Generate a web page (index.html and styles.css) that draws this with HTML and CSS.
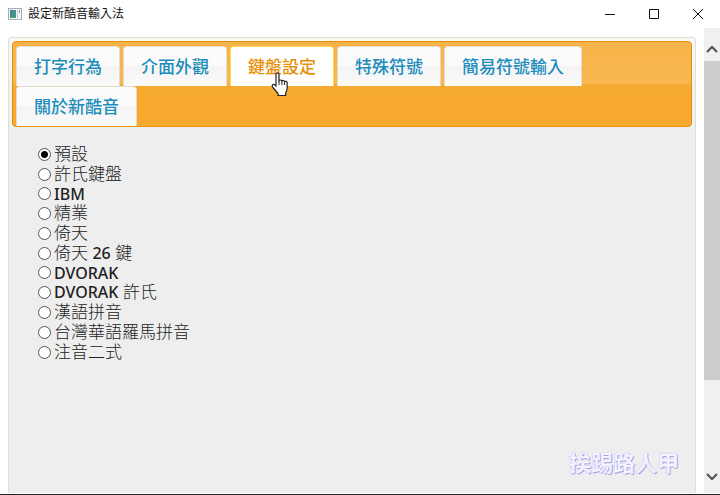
FILE: index.html
```html
<!DOCTYPE html>
<html lang="zh-Hant">
<head>
    <meta charset="UTF-8">
    <meta name="viewport" content="width=device-width, initial-scale=1.0">
    <title>設定新酷音輸入法</title>
    <link rel="stylesheet" href="styles.css">
</head>
<body>
    <div class="window">
        <header class="titlebar">
            <svg class="app-icon" width="14" height="12" viewBox="0 0 14 12">
                <defs>
                    <linearGradient id="screen" x1="0" y1="0" x2="1" y2="1">
                        <stop offset="0" stop-color="#3f7fa0"/>
                        <stop offset="1" stop-color="#4f9f78"/>
                    </linearGradient>
                </defs>
                <rect x="0.5" y="0.5" width="13" height="11" fill="#f4f6f7" stroke="#a3adb2"/>
                <rect x="2" y="2" width="6" height="8" fill="url(#screen)"/>
                <rect x="9" y="2" width="1" height="8" fill="#c3cdd0"/>
                <rect x="11" y="2" width="1" height="3" fill="#6f9f92"/>
            </svg>
            <h1>設定新酷音輸入法</h1>
            <div class="window-controls">
                <button type="button" aria-label="最小化">
                    <svg width="12" height="12" viewBox="0 0 12 12"><path d="M1 6.5h10"/></svg>
                </button>
                <button type="button" aria-label="最大化">
                    <svg width="12" height="12" viewBox="0 0 12 12"><path d="M1.5 1.5h9v9h-9z"/></svg>
                </button>
                <button type="button" aria-label="關閉">
                    <svg width="12" height="12" viewBox="0 0 12 12"><path d="M1 1l10 10M11 1L1 11"/></svg>
                </button>
            </div>
        </header>

        <div class="content">
            <main class="panel">
                <nav class="tabs">
                    <a href="#typing">打字行為</a>
                    <a href="#ui">介面外觀</a>
                    <a href="#keyboard" class="active">鍵盤設定
                        <svg class="pointer" width="18" height="25" viewBox="0 0 18 25">
                            <path d="M5 2.5C5 .4 8 .4 8 2.5V9c.3-1.4 2.700-1.300 2.900.2.500-1.200 2.500-.9 2.700.6.700-1 2.600-.6 2.600 1.200v5c0 2-.6 3.200-1.500 4.700V23.500H7V21.500L2 15.500C.2 13.200 2 11.500 3.700 12.800L5 14.200z" fill="#fff" stroke="#222" stroke-width="1.200" stroke-linejoin="round"/>
                            <path d="M8 9v4M10.900 9.500v3.500M13.600 10.500v2.500" fill="none" stroke="#222"/>
                        </svg>
                    </a>
                    <a href="#symbols">特殊符號</a>
                    <a href="#easy-symbols">簡易符號輸入</a>
                    <a href="#about">關於新酷音</a>
                </nav>
                <form class="layouts">
                    <label><input type="radio" name="layout" checked>預設</label>
                    <label><input type="radio" name="layout">許氏鍵盤</label>
                    <label class="latin"><input type="radio" name="layout">IBM</label>
                    <label><input type="radio" name="layout">精業</label>
                    <label><input type="radio" name="layout">倚天</label>
                    <label><input type="radio" name="layout">倚天 <b>26</b> 鍵</label>
                    <label class="latin"><input type="radio" name="layout">DVORAK</label>
                    <label><input type="radio" name="layout"><b>DVORAK</b> 許氏</label>
                    <label><input type="radio" name="layout">漢語拼音</label>
                    <label><input type="radio" name="layout">台灣華語羅馬拼音</label>
                    <label><input type="radio" name="layout">注音二式</label>
                </form>
            </main>
            <div class="scrollbar">
                <button type="button" aria-label="向上捲動">
                    <svg width="12" height="8" viewBox="0 0 12 8"><path d="M1 7l5-5 5 5"/></svg>
                </button>
                <div class="track"><div class="thumb"></div></div>
                <button type="button" aria-label="向下捲動">
                    <svg width="12" height="8" viewBox="0 0 12 8"><path d="M1 1l5 5 5-5"/></svg>
                </button>
            </div>
        </div>
        <span class="watermark">挨踢路人甲</span>
    </div>
</body>
</html>
```
FILE: styles.css
```css
:root {
    --panel-color: #eeeeee;
    --tab-text: #1c8dbc;
    --accent-color: #e78f08;
    --text-color: #222222;
}

* {
    margin: 0;
    padding: 0;
    box-sizing: border-box;
}

body {
    font-family: "Open Sans", "Noto Sans CJK TC", sans-serif;
    font-size: 17px;
    color: var(--text-color);
    background-color: #ffffff;
}

button {
    border: none;
    background: none;
    display: flex;
    align-items: center;
    justify-content: center;
}

.window {
    position: relative;
    display: flex;
    flex-direction: column;
    height: 100vh;
    overflow: hidden;
    border-bottom: 1px solid #222222;
}

.titlebar {
    display: flex;
    align-items: center;
    height: 28px;
    flex-shrink: 0;
    padding-left: 8px;
}

.titlebar h1 {
    margin-left: 6px;
    font-size: 12px;
    font-weight: 400;
    line-height: 28px;
    color: #111111;
}

.window-controls {
    display: flex;
    margin-left: auto;
}

.window-controls button {
    width: 44px;
    height: 28px;
}

.window-controls svg {
    fill: none;
    stroke: #111111;
}

.content {
    display: flex;
    flex: 1;
    min-height: 0;
}

.panel {
    flex: 1;
    margin: 9px 8px 1px;
    padding: 3px;
    border: 1px solid #dddddd;
    border-bottom: none;
    border-radius: 4px 4px 0 0;
    background: linear-gradient(#fdf8ef, var(--panel-color) 100px);
}

.tabs {
    display: flex;
    flex-wrap: wrap;
    column-gap: 3px;
    padding: 4px 3px 0;
    border: 1px solid var(--accent-color);
    border-radius: 4px;
    background: linear-gradient(#f6b349, #f8b750 50%, #f6ab30 50%, #f8a82c);
}

.tabs a {
    position: relative;
    height: 40px;
    padding: 0 17px;
    border: 1px solid #e3dccb;
    border-bottom: none;
    border-radius: 4px 4px 0 0;
    background: linear-gradient(#fcfcfc, #fafafa 50%, #f4f4f4 50%, #fafafa);
    color: var(--tab-text);
    font-weight: 500;
    line-height: 40px;
    text-decoration: none;
}

.tabs a.active {
    border-color: #fbd850;
    background: #ffffff;
    color: var(--accent-color);
}

.pointer {
    position: absolute;
    left: 40px;
    top: 25px;
    z-index: 1;
}

.layouts {
    display: flex;
    flex-direction: column;
    align-items: flex-start;
    padding: 17px 26px;
    font-weight: 300;
}

.layouts label {
    display: flex;
    align-items: center;
    height: 20px;
    line-height: 20px;
    white-space: pre;
}

.layouts .latin {
    height: 19px;
}

.layouts .latin,
.layouts b {
    font-family: "Noto Sans", sans-serif;
    font-size: 16px;
    font-weight: 500;
}

.layouts input {
    appearance: none;
    width: 13px;
    height: 13px;
    margin-right: 3px;
    border: 1px solid #555555;
    border-radius: 50%;
    background-color: #ffffff;
}

.layouts input:checked {
    background-image: radial-gradient(circle, #000000 3px, transparent 4px);
}

.scrollbar {
    display: flex;
    flex-direction: column;
    width: 16px;
    margin-bottom: 1px;
    background-color: #f0f0f0;
}

.scrollbar button {
    height: 33px;
}

.scrollbar button:first-child {
    padding-top: 8px;
}

.scrollbar svg {
    fill: none;
    stroke: #505050;
    stroke-width: 2;
}

.track {
    flex: 1;
}

.thumb {
    height: 80%;
    background-color: #cdcdcd;
}

.watermark {
    position: absolute;
    right: 41px;
    bottom: 17px;
    font-size: 22px;
    font-weight: 700;
    line-height: 30px;
    color: #f4f2ff;
    text-shadow: 1px 1px 0 #a9a4e6, 0 0 1px #a9a4e6;
}
```
